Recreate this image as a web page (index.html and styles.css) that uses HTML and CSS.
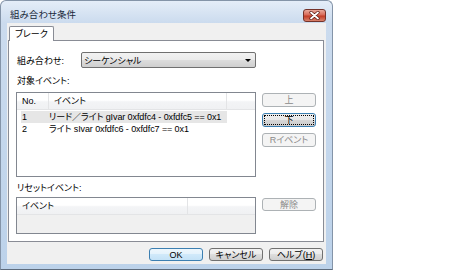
FILE: index.html
```html
<!doctype html>
<html lang="ja">
  <head>
    <meta charset="UTF-8" />
    <title>組み合わせ条件</title>
    <link rel="stylesheet" href="styles.css">
  </head>
  <body>
    <div class="window">
      <div class="titlebar">
        <span class="title">組み合わせ条件</span>
        <span class="close">
          <svg width="11" height="9" viewBox="0 0 11 9">
            <path d="M2 1.5 L9 7.5 M9 1.5 L2 7.5" stroke="#5a1a12" stroke-width="3.2" stroke-linecap="round" />
            <path d="M2 1.5 L9 7.5 M9 1.5 L2 7.5" stroke="#fff" stroke-width="1.8" stroke-linecap="round" />
          </svg>
        </span>
      </div>

      <div class="client">
        <div class="tabs">
          <div class="tab">ブレーク</div>
        </div>

        <div class="panel">
          <div class="combo-row">
            <span class="combo-label">組み合わせ:</span>
            <div class="combo">
              <span>シーケンシャル</span>
              <span class="arrow"></span>
            </div>
          </div>

          <div class="section-label">対象イベント:</div>
          <div class="list-row">
            <div class="listview events">
              <div class="lv-header">
                <div class="col col-no">No.</div>
                <div class="col col-event">イベント</div>
                <div class="col col-rest"></div>
              </div>
              <div class="lv-body">
                <div class="lv-row selected">
                  <span class="cell-no">1</span>
                  <span class="cell-event">リード／ライト gIvar 0xfdfc4 - 0xfdfc5 == 0x1</span>
                </div>
                <div class="lv-row">
                  <span class="cell-no">2</span>
                  <span class="cell-event">ライト sIvar 0xfdfc6 - 0xfdfc7 == 0x1</span>
                </div>
              </div>
            </div>
            <div class="side-buttons">
              <button type="button" class="btn disabled">上</button>
              <button type="button" class="btn focused"><span class="focus-rect">下</span></button>
              <button type="button" class="btn disabled">Rイベント</button>
            </div>
          </div>

          <div class="section-label reset-label">リセットイベント:</div>
          <div class="list-row">
            <div class="listview reset">
              <div class="lv-header">
                <div class="col col-reset">イベント</div>
                <div class="col col-rest"></div>
              </div>
            </div>
            <div class="side-buttons">
              <button type="button" class="btn disabled small">解除</button>
            </div>
          </div>
        </div>

        <div class="footer">
          <button type="button" class="btn default">OK</button>
          <button type="button" class="btn">キャンセル</button>
          <button type="button" class="btn">ヘルプ(<u>H</u>)</button>
        </div>
      </div>
    </div>
  </body>
</html>
```

FILE: styles.css
```css
body {
  margin: 0;
  background: #fff;
  font-family: "Liberation Sans", "Noto Sans CJK JP", sans-serif;
  font-size: 9px;
  color: #000;
  font-feature-settings: "palt";
}
.window {
  width: 333px;
  height: 270px;
  box-sizing: border-box;
  border: 1px solid #8494a8;
  border-bottom-color: #5d6b7c;
  border-radius: 6px 6px 0 0;
  background: linear-gradient(#e4edf8, #cbdbee 22px, #bcd2ea);
  padding: 0 6px 5px;
  display: flex;
  flex-direction: column;
}
.titlebar {
  height: 22px;
  display: flex;
  justify-content: space-between;
  align-items: flex-start;
}
.title {
  margin: 8px 0 0 3px;
  font-size: 9.5px;
  line-height: 11px;
  color: #1b2a3c;
}
.close {
  margin-top: 8px;
  width: 23px;
  height: 13px;
  box-sizing: border-box;
  border: 1px solid #74332a;
  border-radius: 3px;
  background: linear-gradient(#e9a99b, #d86a58 45%, #c33c26 55%, #d9826c);
  display: flex;
  align-items: center;
  justify-content: center;
}
.client {
  flex: 1;
  background: #f0f0f0;
  padding: 3px 2px 3px 1px;
  display: flex;
  flex-direction: column;
}
.tabs {
  display: flex;
  padding-left: 1px;
}
.tab {
  height: 15px;
  box-sizing: border-box;
  border: 1px solid #898c95;
  border-bottom: none;
  border-radius: 2px 2px 0 0;
  background: #fff;
  padding: 0 5px;
  line-height: 14px;
  margin-bottom: -1px;
  position: relative;
}
.panel {
  border: 1px solid #898c95;
  background: #fff;
  padding: 11px 7px 7px;
  display: flex;
  flex-direction: column;
}
.combo-row {
  display: flex;
  align-items: center;
}
.combo-label {
  width: 64px;
  margin-left: 1px;
}
.combo {
  width: 175px;
  height: 16px;
  box-sizing: border-box;
  border: 1px solid #707070;
  border-radius: 2px;
  background: linear-gradient(#f2f2f2, #ebebeb 50%, #dddddd 50%, #cfcfcf);
  display: flex;
  align-items: center;
  justify-content: space-between;
  padding: 0 4px 0 2px;
}
.arrow {
  width: 0;
  height: 0;
  border-left: 3px solid transparent;
  border-right: 3px solid transparent;
  border-top: 3px solid #000;
}
.section-label {
  margin-top: 8px;
  line-height: 11px;
  margin-left: 1px;
}
.reset-label {
  margin-top: 6px;
}
.list-row {
  display: flex;
  gap: 6px;
  margin-top: 5px;
}
.reset-label + .list-row {
  margin-top: 3px;
}
.listview {
  width: 240px;
  box-sizing: border-box;
  border: 1px solid #828790;
  background: #fff;
}
.events {
  height: 85px;
}
.reset {
  height: 37px;
  background: #f0f0f0;
}
.lv-header {
  display: flex;
  height: 17px;
  box-sizing: border-box;
  background: linear-gradient(#ffffff, #ffffff 45%, #f3f4f6 55%, #f0f1f3);
  border-bottom: 1px solid #e3e4e6;
}
.col {
  line-height: 16px;
  padding-left: 5px;
  box-sizing: border-box;
  border-right: 1px solid #e3e4e6;
}
.col-no {
  width: 32px;
}
.col-event {
  width: 178px;
}
.col-reset {
  width: 171px;
}
.col-rest {
  flex: 1;
  border-right: none;
}
.lv-body {
  padding-top: 1px;
}
.lv-row {
  display: flex;
  height: 12px;
  line-height: 12px;
  margin-left: 4px;
  width: 206px;
}
.lv-row.selected {
  background: #e6e6e6;
}
.cell-no {
  width: 27px;
  padding-left: 1px;
}
.cell-event {
  white-space: nowrap;
  letter-spacing: -0.1px;
}
.side-buttons {
  display: flex;
  flex-direction: column;
  gap: 6px;
  padding-top: 1px;
}
.btn {
  width: 54px;
  height: 14px;
  box-sizing: border-box;
  border: 1px solid #707070;
  border-radius: 3px;
  background: linear-gradient(#f2f2f2, #ebebeb 50%, #dddddd 50%, #cfcfcf);
  font: inherit;
  color: #000;
  padding: 0;
  line-height: 12px;
  display: flex;
  align-items: center;
  justify-content: center;
}
.btn.small {
  height: 13px;
}
.btn.disabled {
  border-color: #adb2b5;
  background: #f4f4f4;
  color: #8a8a8a;
}
.btn.focused {
  border-color: #3c7fb1;
  background: linear-gradient(#f0f0f0, #e6e6e6 50%, #d7d7d7 50%, #cbcbcb);
  padding: 1px;
}
.focus-rect {
  width: 100%;
  height: 100%;
  box-sizing: border-box;
  border: 1px dotted #000;
  display: flex;
  align-items: center;
  justify-content: center;
}
.btn.default {
  border-color: #3c7fb1;
  background: linear-gradient(#eef7fd, #e3f2fc 50%, #d0e9fa 50%, #c4e2f7);
}
.footer {
  display: flex;
  justify-content: flex-end;
  gap: 6px;
  padding: 6px 1px 0 0;
}
.footer .btn {
  height: 13px;
}
```
